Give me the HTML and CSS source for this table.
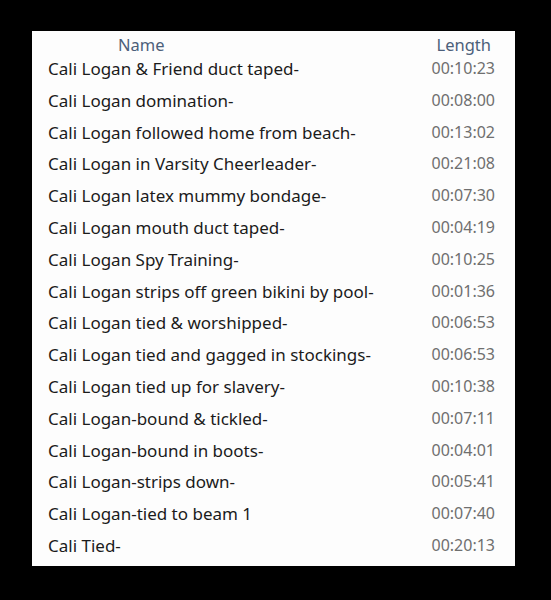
FILE: index.html
```html
<!DOCTYPE html>
<html>
<head>
<meta charset="utf-8">
<link rel="stylesheet" href="styles.css">
</head>
<body>
<div class="panel">
  <div class="list">
    <div class="hd hd-name">Name</div>
    <div class="hd hd-len">Length</div>

    <div class="name">Cali Logan &amp; Friend duct taped-</div><div class="len">00:10:23</div>
    <div class="name">Cali Logan domination-</div><div class="len">00:08:00</div>
    <div class="name">Cali Logan followed home from beach-</div><div class="len">00:13:02</div>
    <div class="name">Cali Logan in Varsity Cheerleader-</div><div class="len">00:21:08</div>
    <div class="name">Cali Logan latex mummy bondage-</div><div class="len">00:07:30</div>
    <div class="name">Cali Logan mouth duct taped-</div><div class="len">00:04:19</div>
    <div class="name">Cali Logan Spy Training-</div><div class="len">00:10:25</div>
    <div class="name">Cali Logan strips off green bikini by pool-</div><div class="len">00:01:36</div>
    <div class="name">Cali Logan tied &amp; worshipped-</div><div class="len">00:06:53</div>
    <div class="name">Cali Logan tied and gagged in stockings-</div><div class="len">00:06:53</div>
    <div class="name">Cali Logan tied up for slavery-</div><div class="len">00:10:38</div>
    <div class="name">Cali Logan-bound &amp; tickled-</div><div class="len">00:07:11</div>
    <div class="name">Cali Logan-bound in boots-</div><div class="len">00:04:01</div>
    <div class="name">Cali Logan-strips down-</div><div class="len">00:05:41</div>
    <div class="name">Cali Logan-tied to beam 1</div><div class="len">00:07:40</div>
    <div class="name">Cali Tied-</div><div class="len">00:20:13</div>
  </div>
</div>
</body>
</html>
```

FILE: styles.css
```css
html, body {
  margin: 0;
  padding: 0;
  background: #000;
}
body {
  width: 551px;
  height: 600px;
  padding-top: 31px;
  box-sizing: border-box;
  font-family: "Noto Sans", "Open Sans", sans-serif;
}
.panel {
  margin-left: 32px;
  width: 483px;
  height: 535px;
  background: #fdfdfd;
  box-sizing: border-box;
}
.list {
  display: grid;
  grid-template-columns: 1fr 90px;
  grid-auto-rows: 31.8px;
  grid-template-rows: 22px;
}
.hd {
  font-size: 16.5px;
  line-height: 16px;
  padding-top: 6px;
  color: #4c5f7a;
  white-space: nowrap;
}
.hd-name {
  padding-left: 86px;
}
.hd-len {
  text-align: right;
  padding-right: 24px;
}
.name, .len {
  line-height: 31.8px;
  white-space: nowrap;
}
.name {
  font-size: 17px;
  padding-left: 16px;
  color: #1b1b1b;
}
.len {
  font-size: 16px;
  text-align: right;
  padding-right: 20px;
  color: #6f6f6f;
}
```
